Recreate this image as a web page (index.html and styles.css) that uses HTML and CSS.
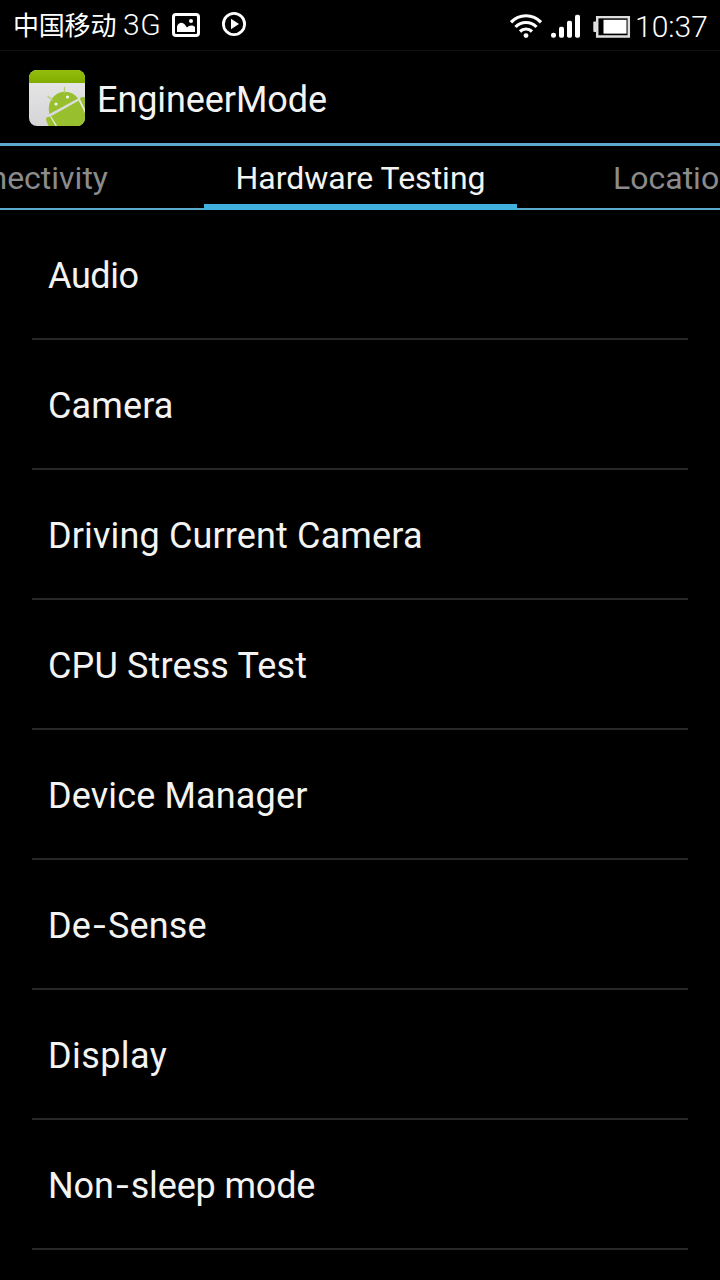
FILE: index.html
```html
<!DOCTYPE html>
<html lang="en">
<head>
<meta charset="utf-8">
<title>EngineerMode</title>
<link rel="stylesheet" href="styles.css">
</head>
<body>
<div class="screen">
  <header class="status">
    <div class="status-left">
      <span class="carrier"><span class="carrier-cjk">中国移动</span><span class="carrier-net">3G</span></span>
      <svg class="icon-photo" width="28" height="24" viewBox="0 0 28 24">
        <rect x="1.500" y="1.500" width="25" height="21" rx="2.500" fill="none" stroke="#fff" stroke-width="3"/>
        <path d="M5 19V13.500C6.500 9 11 8.500 13.500 12.500L15 14.500C17 12.500 20 11.500 23 14V19Z" fill="#fff"/>
        <circle cx="19" cy="8" r="2" fill="#fff"/>
      </svg>
      <svg class="icon-play" width="24" height="24" viewBox="0 0 24 24">
        <circle cx="12" cy="12" r="10.600" fill="none" stroke="#fff" stroke-width="2.800"/>
        <path d="M9 6.700L17 12L9 17.300Z" fill="#fff"/>
      </svg>
    </div>
    <div class="status-right">
      <svg class="icon-wifi" width="32" height="26" viewBox="0 0 32 26">
        <g fill="none" stroke="#fff" stroke-width="3.200">
          <path d="M1 9.300A20.500 20.500 0 0 1 31 9.300"/>
          <path d="M5.500 14A14.500 14.500 0 0 1 26.500 14"/>
          <path d="M10 18.500A8.500 8.500 0 0 1 22 18.500"/>
        </g>
        <circle cx="16" cy="22.600" r="2.400" fill="#fff"/>
      </svg>
      <svg class="icon-signal" width="30" height="24" viewBox="0 0 30 24">
        <g fill="#fff">
          <rect x="0" y="18.800" width="5" height="5" rx="2.300"/>
          <rect x="8" y="12.800" width="5" height="11" rx="1.800"/>
          <rect x="16" y="6.800" width="5" height="17" rx="1.800"/>
          <rect x="24" y="0.800" width="5" height="23" rx="1.800"/>
        </g>
      </svg>
      <svg class="icon-battery" width="38" height="22" viewBox="0 0 38 22">
        <rect x="4.200" y="1.100" width="31.600" height="19.400" fill="none" stroke="#dedede" stroke-width="2.500"/>
        <rect x="0.300" y="5.500" width="3.500" height="10.500" rx="1" fill="#dedede"/>
        <rect x="10.500" y="3.800" width="23" height="13.800" fill="#fff"/>
      </svg>
      <span class="clock">10:37</span>
    </div>
  </header>

  <div class="action-bar">
    <svg class="app-icon" width="56" height="56" viewBox="0 0 56 56">
      <defs>
        <clipPath id="tile"><rect width="56" height="56" rx="8"/></clipPath>
        <linearGradient id="paper" x1="0" y1="0" x2="0" y2="1"><stop offset="0" stop-color="#e9e9e9"/><stop offset="1" stop-color="#d5d5d8"/></linearGradient>
        <linearGradient id="band" x1="0" y1="0" x2="0" y2="1"><stop offset="0" stop-color="#93bd0a"/><stop offset="1" stop-color="#81ad00"/></linearGradient>
      </defs>
      <g clip-path="url(#tile)">
        <rect width="56" height="56" fill="url(#paper)"/>
        <rect width="56" height="13" fill="url(#band)"/>
        <g fill="#98c02e">
          <path d="M20.500 44C17.500 33 24 24 33 22C40 20.500 46 24 49 28.500Z"/>
          <path d="M21.500 46.500L50 30.500L57 44V57H28Z"/>
          <path d="M17 50C16.500 46.500 21 45.500 22.500 48.500L27 57H20Z"/>
          <path d="M51.500 30C50 27.500 53 26 57 27.500V41Z"/>
        </g>
        <path d="M50.300 30.500L57 44M22 47L28 57" stroke="#e4ecd0" stroke-width="1.200" fill="none"/>
        <path d="M18.500 26L24 30.500M35.500 17V23" stroke="#b4cc72" stroke-width="1.200" fill="none"/>
        <circle cx="27" cy="34" r="1.600" fill="#f2f6e4"/>
        <circle cx="38.500" cy="27" r="1.600" fill="#f2f6e4"/>
      </g>
    </svg>
    <h1 class="title">EngineerMode</h1>
  </div>

  <nav class="tabs">
    <div class="tab tab-prev"><span class="tab-label">Connectivity</span></div>
    <div class="tab tab-active"><span class="tab-label">Hardware Testing</span></div>
    <div class="tab tab-next"><span class="tab-label">Location</span></div>
  </nav>

  <ul class="list">
    <li class="row row-audio">Audio</li>
    <li class="row">Camera</li>
    <li class="row">Driving Current Camera</li>
    <li class="row">CPU Stress Test</li>
    <li class="row">Device Manager</li>
    <li class="row">De<span class="hyphen">-</span>Sense</li>
    <li class="row row-display">Display</li>
    <li class="row row-sleep">Non<span class="hyphen">-</span>sleep mode</li>
  </ul>
</div>
</body>
</html>
```
FILE: styles.css
```css
* { box-sizing: border-box; }
body { margin: 0; background: #000; }
.screen {
  width: 720px;
  height: 1280px;
  overflow: hidden;
  background: #000;
  color: #f3f3f3;
  font-family: Roboto, "Noto Sans CJK SC", sans-serif;
}
.status {
  display: flex;
  justify-content: space-between;
  height: 51px;
  border-bottom: 1px solid #101010;
  color: #fff;
}
.status-left, .status-right { display: flex; align-items: flex-start; }
.status-left { padding-left: 13px; }
.carrier { display: flex; width: 159px; height: 50px; line-height: 50px; }
.carrier-cjk { width: 110px; font: 400 26px/48px "Noto Sans CJK SC", sans-serif; letter-spacing: -0.200px; }
.carrier-net { font-size: 30px; font-weight: 300; letter-spacing: 0.500px; }
.icon-photo { margin-top: 13px; }
.icon-play { margin: 12px 0 0 22px; }
.status-right { padding-right: 12px; }
.icon-wifi { margin-top: 13px; }
.icon-signal { margin: 14px 0 0 9px; }
.icon-battery { margin: 16px 0 0 12px; }
.clock { width: 73px; margin-left: 4px; font-size: 30px; font-weight: 300; line-height: 54px; white-space: nowrap; }
.action-bar {
  display: flex;
  align-items: flex-start;
  height: 92px;
  padding: 19px 0 0 29px;
}
.title { margin: 9px 0 0 12px; font-size: 36px; font-weight: 400; line-height: 42px; letter-spacing: -0.080px; }
.tabs {
  display: flex;
  justify-content: space-between;
  height: 67px;
  border-top: 3px solid #5baacb;
  box-shadow: inset 0 -2px #5baacb;
  font-size: 32px;
  line-height: 64px;
  white-space: nowrap;
}
.tab { display: flex; height: 64px; overflow: hidden; color: #8b8b8b; }
.tab-prev { width: 204px; justify-content: flex-end; padding-right: 96px; }
.tab-active { width: 313px; justify-content: center; border-bottom: 6px solid #40b1df; color: #f3f3f3; }
.tab-next { width: 203px; padding-left: 96px; }
.list { margin: 0; padding: 0 32px; list-style: none; }
.row {
  height: 130px;
  padding-left: 16px;
  border-bottom: 2px solid #282828;
  font-size: 36px;
  line-height: 132px;
  letter-spacing: 0.140px;
  white-space: nowrap;
}
.row-audio { letter-spacing: -0.400px; }
.row-display { letter-spacing: 0.400px; }
.row-sleep { letter-spacing: -0.150px; }
.hyphen {
  display: inline-block;
  width: 17px;
  text-align: center;
  line-height: 1;
  transform: scaleX(1.250);
}
```
